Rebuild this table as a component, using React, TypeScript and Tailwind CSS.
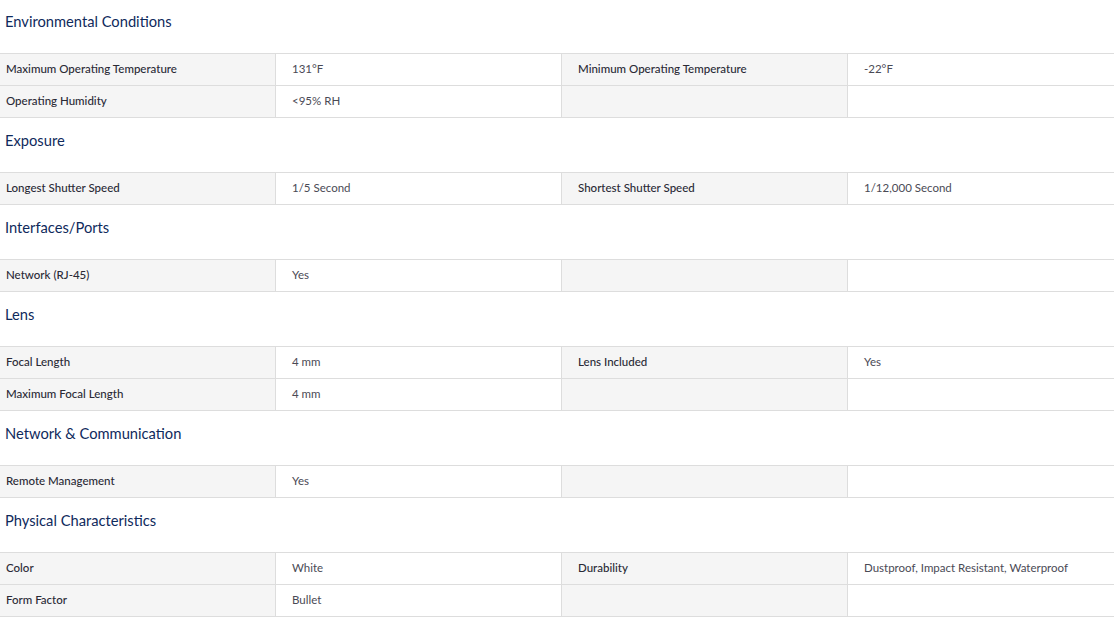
import React from "react";

type Row = [string, string, string?, string?];
const sections: { title: string; rows: Row[] }[] = [
  {
    title: "Environmental Conditions",
    rows: [
      ["Maximum Operating Temperature", "131°F", "Minimum Operating Temperature", "-22°F"],
      ["Operating Humidity", "<95% RH"],
    ],
  },
  {
    title: "Exposure",
    rows: [["Longest Shutter Speed", "1/5 Second", "Shortest Shutter Speed", "1/12,000 Second"]],
  },
  { title: "Interfaces/Ports", rows: [["Network (RJ-45)", "Yes"]] },
  {
    title: "Lens",
    rows: [
      ["Focal Length", "4 mm", "Lens Included", "Yes"],
      ["Maximum Focal Length", "4 mm"],
    ],
  },
  { title: "Network & Communication", rows: [["Remote Management", "Yes"]] },
  {
    title: "Physical Characteristics",
    rows: [
      ["Color", "White", "Durability", "Dustproof, Impact Resistant, Waterproof"],
      ["Form Factor", "Bullet"],
    ],
  },
];

export default function App() {
  return (
    <div className="w-[1114px] h-[626px] overflow-hidden bg-white" style={{ fontFamily: "Lato, 'Noto Sans', sans-serif" }}>
      <div className="w-[1144px] -ml-[11px] -mt-[1px]">
        {sections.map((s) => (
          <div key={s.title}>
            <div className="h-[54px] px-4 pt-[11px] text-[14.7px] leading-[22px] text-[#0f2a5c]">{s.title}</div>
            <div className="border-t border-[#dddddd]">
              {s.rows.map((r, i) => (
                <div key={i} className="grid grid-cols-[286px_286px_286px_286px] h-[32px] border-b border-[#dddddd] text-[11.5px]">
                  <div className="bg-[#f5f5f5] pl-[17px] pb-[2px] flex items-center font-medium text-[#2a2a35]">{r[0]}</div>
                  <div className="border-l border-[#dddddd] pl-4 pb-[2px] flex items-center text-[#4a4a55]">{r[1]}</div>
                  <div className="border-l border-[#dddddd] bg-[#f5f5f5] pl-4 pb-[2px] flex items-center font-medium text-[#2a2a35]">{r[2] ?? ""}</div>
                  <div className="border-l border-[#dddddd] pl-4 pb-[2px] flex items-center text-[#4a4a55]">{r[3] ?? ""}</div>
                </div>
              ))}
            </div>
          </div>
        ))}
      </div>
    </div>
  );
}
